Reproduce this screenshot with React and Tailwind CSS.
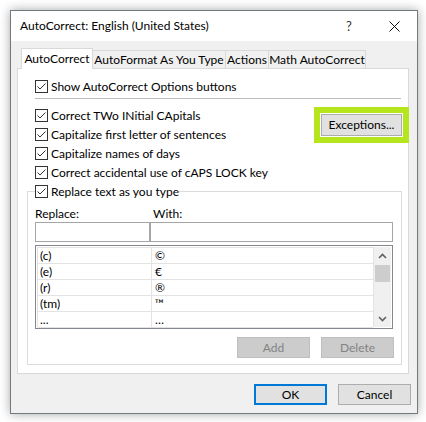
import React from "react";

const font = { fontFamily: 'Lato, "Noto Sans", sans-serif' };

function Check() {
  return (
    <span className="flex h-[13px] w-[13px] shrink-0 items-center justify-center border border-[#333333] bg-white">
      <svg width="11" height="11" viewBox="0 0 11 11">
        <path d="M1.5 5.5 L4 8 L9.5 2.5" fill="none" stroke="#333333" strokeWidth="1" />
      </svg>
    </span>
  );
}

function CheckRow({ label }) {
  return (
    <div className="flex h-[19px] items-center gap-[3px] text-[12px] text-black">
      <Check />
      <span className="whitespace-nowrap">{label}</span>
    </div>
  );
}

const rows = [
  ["(c)", "©"],
  ["(e)", "€"],
  ["(r)", "®"],
  ["(tm)", "™"],
  ["...", "…"],
];

export default function App() {
  return (
    <div className="h-[422px] w-[426px] bg-white p-[10px]" style={font}>
      <div className="flex h-[404px] w-[408px] flex-col border border-[#6f7b80] shadow-[0_0_10px_rgba(0,0,0,0.35)]">
        {/* Title bar */}
        <div className="flex h-[30px] items-center bg-white pl-[9px] text-[12px] text-black">
          <span className="flex-1">AutoCorrect: English (United States)</span>
          <span className="w-[20px] text-center text-[13px] leading-none text-[#333]">?</span>
          <span className="ml-[29px] mr-[17px] flex h-[12px] w-[12px] items-center justify-center">
            <svg width="11" height="11" viewBox="0 0 11 11">
              <path d="M0.5 0.5 L10.5 10.5 M10.5 0.5 L0.5 10.5" stroke="#111" strokeWidth="1" />
            </svg>
          </span>
        </div>

        {/* Body */}
        <div className="flex flex-1 flex-col bg-[#f0f0f0] px-[6px] pt-[7px]">
          {/* Tabs */}
          <div className="relative z-10 ml-[4px] flex h-[21px] items-end text-[12px] text-black">
            <div className="flex h-[21px] w-[72px] items-center justify-center border border-b-0 border-[#d9d9d9] bg-white pb-[1px]">
              AutoCorrect
            </div>
            <div className="mb-px flex h-[18px] w-[133px] items-center justify-center border-r border-t border-[#d9d9d9] bg-[#f0f0f0] whitespace-nowrap">
              AutoFormat As You Type
            </div>
            <div className="mb-px flex h-[18px] w-[43px] items-center justify-center border-r border-t border-[#d9d9d9] bg-[#f0f0f0]">
              Actions
            </div>
            <div className="mb-px flex h-[18px] w-[97px] items-center justify-center border-r border-t border-[#d9d9d9] bg-[#f0f0f0] whitespace-nowrap">
              Math AutoCorrect
            </div>
          </div>

          {/* Panel */}
          <div className="-mt-px flex h-[306px] w-[392px] flex-col border border-[#d9d9d9] bg-white pl-[17px] pr-[6px]">
            <div className="mt-[8px]">
              <CheckRow label="Show AutoCorrect Options buttons" />
            </div>
            <div className="mt-[2px] h-px w-[366px] bg-[#bdbdbd]" />
            <div className="mt-[7px] flex">
              <div className="flex flex-1 flex-col">
                <CheckRow label="Correct TWo INitial CApitals" />
                <CheckRow label="Capitalize first letter of sentences" />
                <CheckRow label="Capitalize names of days" />
                <CheckRow label="Correct accidental use of cAPS LOCK key" />
              </div>
              <div className="pt-[8px]">
                <button className="flex h-[22px] w-[81px] items-center justify-center border border-[#adadad] bg-[#e1e1e1] text-[12px] text-black outline outline-[6px] outline-offset-[1px] outline-[#b5e51d]">
                  Exceptions...
                </button>
              </div>
            </div>

            <fieldset className="-ml-[8px] w-[375px] border border-[#dcdcdc] px-[7px] pb-[6px]">
              <legend className="p-0">
                <CheckRow label="Replace text as you type" />
              </legend>
              <div className="mt-[5px] flex h-[16px] items-center text-[12px] text-black">
                <span className="w-[118px]">Replace:</span>
                <span>With:</span>
              </div>
              <div className="flex">
                <div className="h-[20px] w-[115px] border border-[#a5a5a5] bg-white" />
                <div className="h-[20px] w-[243px] border border-[#a5a5a5] bg-white" />
              </div>
              <div className="mt-[3px] flex h-[84px] w-[358px] border border-[#828790] bg-white p-px">
                <div className="flex flex-1 flex-col border-l border-r border-t border-[#e3e3e3]">
                  {rows.map(([a, b], i) => (
                    <div key={i} className="flex h-[16px] border-b border-[#e3e3e3] text-[12px] leading-[15px] text-black">
                      <div className="w-[114px] border-r border-[#e3e3e3] pl-[2px]">{a}</div>
                      <div className="flex-1 pl-[3px]">{b}</div>
                    </div>
                  ))}
                </div>
                <div className="flex w-[17px] flex-col bg-[#f0f0f0]">
                  <div className="flex h-[17px] items-center justify-center">
                    <svg width="9" height="6" viewBox="0 0 9 6">
                      <path d="M1 5 L4.5 1.5 L8 5" fill="none" stroke="#606060" strokeWidth="1.6" />
                    </svg>
                  </div>
                  <div className="mx-px mt-px h-[17px] bg-[#cdcdcd]" />
                  <div className="flex-1" />
                  <div className="flex h-[17px] items-center justify-center">
                    <svg width="9" height="6" viewBox="0 0 9 6">
                      <path d="M1 1 L4.5 4.5 L8 1" fill="none" stroke="#606060" strokeWidth="1.6" />
                    </svg>
                  </div>
                </div>
              </div>
              <div className="mt-[8px] flex justify-end gap-[11px] text-[12px]">
                <div className="flex h-[21px] w-[73px] items-center justify-center border border-[#bfbfbf] bg-[#cccccc] text-[#838383]">
                  Add
                </div>
                <div className="flex h-[21px] w-[73px] items-center justify-center border border-[#bfbfbf] bg-[#cccccc] text-[#838383]">
                  Delete
                </div>
              </div>
            </fieldset>
          </div>

          {/* Dialog buttons */}
          <div className="mt-[10px] flex justify-end gap-[11px] text-[12px] text-black">
            <button className="flex h-[21px] w-[73px] items-center justify-center border-2 border-[#0078d7] bg-[#e1e1e1]">
              OK
            </button>
            <button className="flex h-[21px] w-[73px] items-center justify-center border border-[#adadad] bg-[#e1e1e1]">
              Cancel
            </button>
          </div>
        </div>
      </div>
    </div>
  );
}
